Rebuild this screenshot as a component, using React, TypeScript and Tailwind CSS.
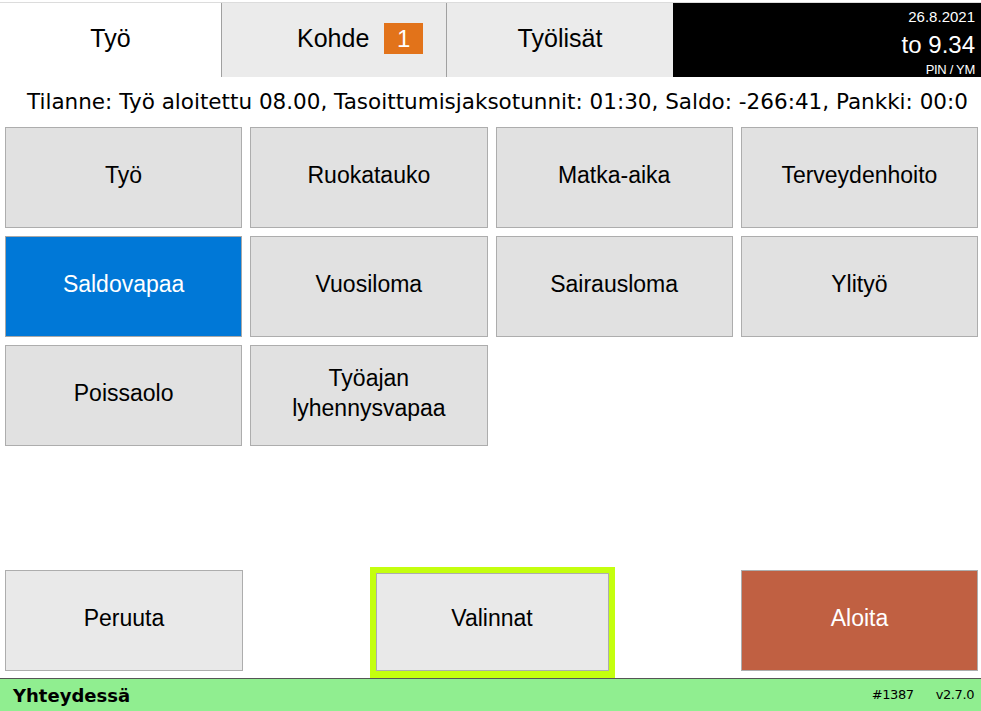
import React from 'react';

const grid = [
  { label: 'Työ' },
  { label: 'Ruokatauko' },
  { label: 'Matka-aika' },
  { label: 'Terveydenhoito' },
  { label: 'Saldovapaa', active: true },
  { label: 'Vuosiloma' },
  { label: 'Sairausloma' },
  { label: 'Ylityö' },
  { label: 'Poissaolo' },
  { label: 'Työajan\nlyhennysvapaa' },
];

const App = () => {
  return (
    <div className="h-[711px] w-[981px] flex flex-col bg-white overflow-hidden text-black font-['Liberation_Sans',Arial,sans-serif]">
      {/* tabs */}
      <div className="mt-[2px] h-[75px] flex border-t border-[#dcdcdc]">
        <div className="w-[222px] flex items-center justify-center bg-white text-[25px] pb-[3px] border-r border-[#a0a0a0]">
          Työ
        </div>
        <div className="w-[225px] flex items-center bg-[#ebebeb] text-[25px] pb-[3px] border-r border-[#a0a0a0] pl-[75px] gap-[15px]">
          <span>Kohde</span>
          <span className="bg-[#e2731a] text-white w-[39px] h-[31px] flex items-center justify-center text-[24px]">1</span>
        </div>
        <div className="w-[226px] flex items-center justify-center bg-[#ebebeb] text-[25px] pb-[3px]">
          Työlisät
        </div>
        <div className="flex-1 bg-black text-white flex flex-col items-end pr-[6px] pt-[6px] leading-none">
          <span className="text-[15px]">26.8.2021</span>
          <span className="text-[24px] mt-[9px]">to 9.34</span>
          <span className="text-[13px] mt-[6px] tracking-[-0.3px]">PIN / YM</span>
        </div>
      </div>

      {/* status */}
      <div className="h-[50px] mr-[12px] flex items-center pl-[27px] whitespace-nowrap overflow-hidden text-[21.5px] font-['DejaVu_Sans',Tahoma,sans-serif]">
        Tilanne: Työ aloitettu 08.00, Tasoittumisjaksotunnit: 01:30, Saldo: -266:41, Pankki: 00:00
      </div>

      {/* choices */}
      <div className="grid grid-cols-4 gap-[8px] pl-[5px] pr-[3px]">
        {grid.map((b, i) => (
          <div
            key={i}
            className={`h-[101px] flex items-center justify-center text-center text-[23px] leading-[30px] pb-[5px] whitespace-pre-line border ${
              b.active ? 'bg-[#0078d7] border-[#a8a8a8] text-white' : 'bg-[#e1e1e1] border-[#adadad]'
            }`}
          >
            {b.label}
          </div>
        ))}
      </div>

      <div className="flex-1" />

      {/* actions */}
      <div className="flex items-end justify-between pl-[5px] pr-[3px]">
        <div className="w-[238px] h-[101px] mb-[7px] pb-[5px] bg-[#e9e9e9] border border-[#adadad] flex items-center justify-center text-[23px]">
          Peruuta
        </div>
        <div className="w-[245px] h-[111px] border-[6px] border-b-[7px] border-[#c4ff0e] flex">
          <div className="flex-1 bg-[#e9e9e9] border border-[#adadad] pb-[7px] flex items-center justify-center text-[23px]">
            Valinnat
          </div>
        </div>
        <div className="w-[237px] h-[101px] mb-[7px] pb-[5px] bg-[#c06042] border border-[#adadad] flex items-center justify-center text-[23px] text-white">
          Aloita
        </div>
      </div>

      {/* connection bar */}
      <div className="h-[33px] bg-[#90ee90] border-t border-[#555555] flex items-center px-[13px] font-['DejaVu_Sans',Tahoma,sans-serif]">
        <span className="font-bold text-[18px]">Yhteydessä</span>
        <span className="ml-auto text-[13px] tracking-[-0.4px]">#1387</span>
        <span className="ml-[22px] mr-[-6px] text-[13px] tracking-[-0.4px]">v2.7.0</span>
      </div>
    </div>
  );
};

export default App;
